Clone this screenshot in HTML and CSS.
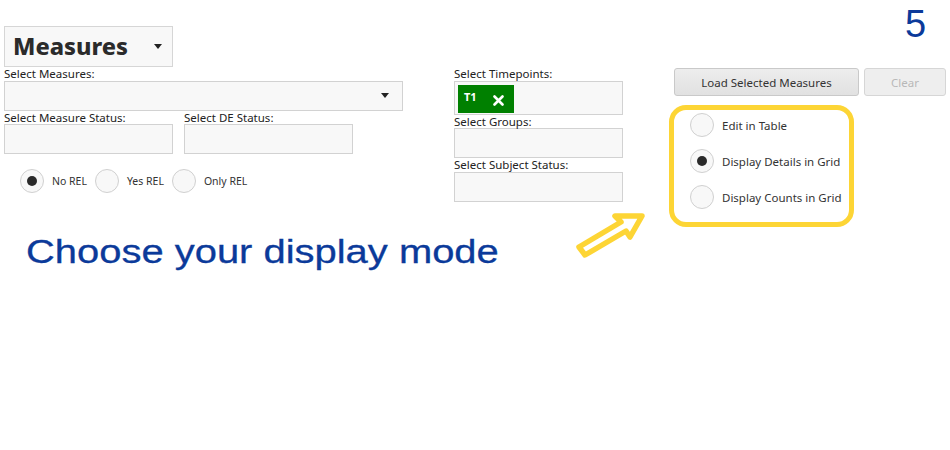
FILE: index.html
```html
<!DOCTYPE html>
<html lang="en">
<head>
<meta charset="utf-8">
<title>Measures</title>
<link rel="stylesheet" href="styles.css">
</head>
<body>
<div class="page">
  <div class="step">5</div>
  <div class="main">
    <div class="col-left">
      <div class="measures-select"><span>Measures</span><i class="caret"></i></div>
      <label class="lbl">Select Measures:</label>
      <div class="field field-wide"><i class="caret"></i></div>
      <div class="pair">
        <div class="pair-item">
          <label class="lbl">Select Measure Status:</label>
          <div class="field"></div>
        </div>
        <div class="pair-item">
          <label class="lbl">Select DE Status:</label>
          <div class="field"></div>
        </div>
      </div>
      <div class="rel">
        <div class="radio-item"><span class="radio on"></span><span>No REL</span></div>
        <div class="radio-item"><span class="radio"></span><span>Yes REL</span></div>
        <div class="radio-item"><span class="radio"></span><span>Only REL</span></div>
      </div>
    </div>
    <div class="col-mid">
      <label class="lbl">Select Timepoints:</label>
      <div class="field field-tp">
        <div class="chip">
          <span class="chip-text">T1</span>
          <svg class="chip-x" width="11" height="11" viewBox="0 0 11 11"><path d="M1.5 1.5 L9.5 9.5 M9.5 1.5 L1.5 9.5" stroke="#fff" stroke-width="2.6" stroke-linecap="round"/></svg>
        </div>
      </div>
      <label class="lbl">Select Groups:</label>
      <div class="field"></div>
      <label class="lbl">Select Subject Status:</label>
      <div class="field"></div>
    </div>
    <div class="col-right">
      <div class="btns">
        <button class="btn btn-load">Load Selected Measures</button>
        <button class="btn btn-clear">Clear</button>
      </div>
      <div class="display-box">
        <div class="radio-item"><span class="radio"></span><span>Edit in Table</span></div>
        <div class="radio-item"><span class="radio on"></span><span>Display Details in Grid</span></div>
        <div class="radio-item"><span class="radio"></span><span>Display Counts in Grid</span></div>
      </div>
    </div>
  </div>
  <div class="caption">Choose your display mode</div>
  <svg class="arrow" width="85" height="60" viewBox="0 0 85 60">
    <polygon points="9,42 51,17 45,11 72,11 60,32 56,26 15,50" fill="none" stroke="#fdd535" stroke-width="5.5" stroke-linejoin="round"/>
  </svg>
</div>
</body>
</html>
```

FILE: styles.css
```css
* {
  box-sizing: border-box;
  margin: 0;
  padding: 0;
}

body {
  width: 950px;
  height: 450px;
  overflow: hidden;
  background: #fff;
  font-family: "Noto Sans", "Open Sans", sans-serif;
  font-size: 11.5px;
  color: #222;
}

.page {
  position: relative;
  width: 950px;
  height: 450px;
  overflow: hidden;
  padding: 26px 0 0 4px;
}

.step {
  position: absolute;
  left: 905px;
  top: 5px;
  font-family: "Liberation Sans", Arial, sans-serif;
  font-size: 38px;
  line-height: 38px;
  color: #0b3a9a;
}

.main {
  display: flex;
  align-items: flex-start;
}

.col-left {
  width: 399px;
}

.col-mid {
  width: 169px;
  margin-left: 51px;
  padding-top: 41px;
}

.col-right {
  width: 272px;
  margin-left: 51px;
  padding-top: 42px;
}

.measures-select {
  width: 169px;
  height: 41px;
  border: 1px solid #d6d6d6;
  background: #f8f8f8;
  display: flex;
  align-items: center;
  justify-content: space-between;
  padding: 0 10px 0 8px;
}

.measures-select span {
  font-weight: 800;
  font-size: 23.5px;
  line-height: 39px;
  color: #2b2b2b;
}

.caret {
  display: block;
  width: 0;
  height: 0;
  border-left: 4.5px solid transparent;
  border-right: 4.5px solid transparent;
  border-top: 5px solid #222;
}

.lbl {
  display: block;
  height: 13.5px;
  line-height: 13.5px;
  white-space: nowrap;
}

.field {
  height: 30px;
  border: 1px solid #d2d2d2;
  background: #f8f8f8;
}

.field-wide {
  width: 399px;
  display: flex;
  align-items: center;
  justify-content: flex-end;
  padding-right: 13px;
}

.pair {
  display: flex;
  gap: 11px;
}

.pair-item {
  width: 169px;
}

.rel {
  display: flex;
  align-items: center;
  margin-top: 15px;
  padding-left: 16px;
  font-size: 10.5px;
}

.radio-item {
  display: flex;
  align-items: center;
  gap: 8px;
  color: #333;
  white-space: nowrap;
}

.rel .radio-item {
  margin-right: 8px;
}

.radio {
  flex: none;
  width: 24px;
  height: 24px;
  border-radius: 50%;
  border: 1px solid #d0d0d0;
  background: #f8f8f8;
  display: flex;
  align-items: center;
  justify-content: center;
}

.radio.on::after {
  content: "";
  width: 10px;
  height: 10px;
  border-radius: 50%;
  background: #2a2a2a;
}

.field-tp {
  height: 34px;
  padding: 3px 3px 1px;
}

.chip {
  display: flex;
  align-items: flex-start;
  width: 56px;
  height: 28px;
  background: #008000;
  padding: 5px 0 0 6px;
  gap: 16px;
}

.chip-text {
  color: #fff;
  font-weight: 700;
  font-size: 11px;
  line-height: 14px;
}

.chip-x {
  margin-top: 5px;
}

.btns {
  display: flex;
  gap: 5px;
}

.btn {
  height: 28px;
  border: 1px solid #c9c9c9;
  border-radius: 3px;
  background: linear-gradient(#ededed, #e1e1e1);
  font-family: inherit;
  font-size: 11.5px;
  color: #333;
  display: flex;
  align-items: center;
  justify-content: center;
}

.btn-load {
  width: 185px;
}

.btn-clear {
  width: 82px;
  color: #b8b8b8;
  background: #eeeeee;
  border-color: #d6d6d6;
}

.display-box {
  width: 185px;
  height: 122px;
  margin: 9px 0 0 -5px;
  border: 5px solid #fdd535;
  border-radius: 17px;
  padding: 3px 0 0 16px;
  display: flex;
  flex-direction: column;
  gap: 12px;
}

.caption {
  width: fit-content;
  margin: 5px 0 0 22px;
  font-family: "Liberation Sans", Arial, sans-serif;
  font-size: 33px;
  line-height: 40px;
  color: #0b3a9a;
  white-space: nowrap;
  transform: scaleX(1.21);
  transform-origin: left center;
  -webkit-text-stroke: 0.3px #0b3a9a;
}

.arrow {
  position: absolute;
  left: 570px;
  top: 205px;
}
```
